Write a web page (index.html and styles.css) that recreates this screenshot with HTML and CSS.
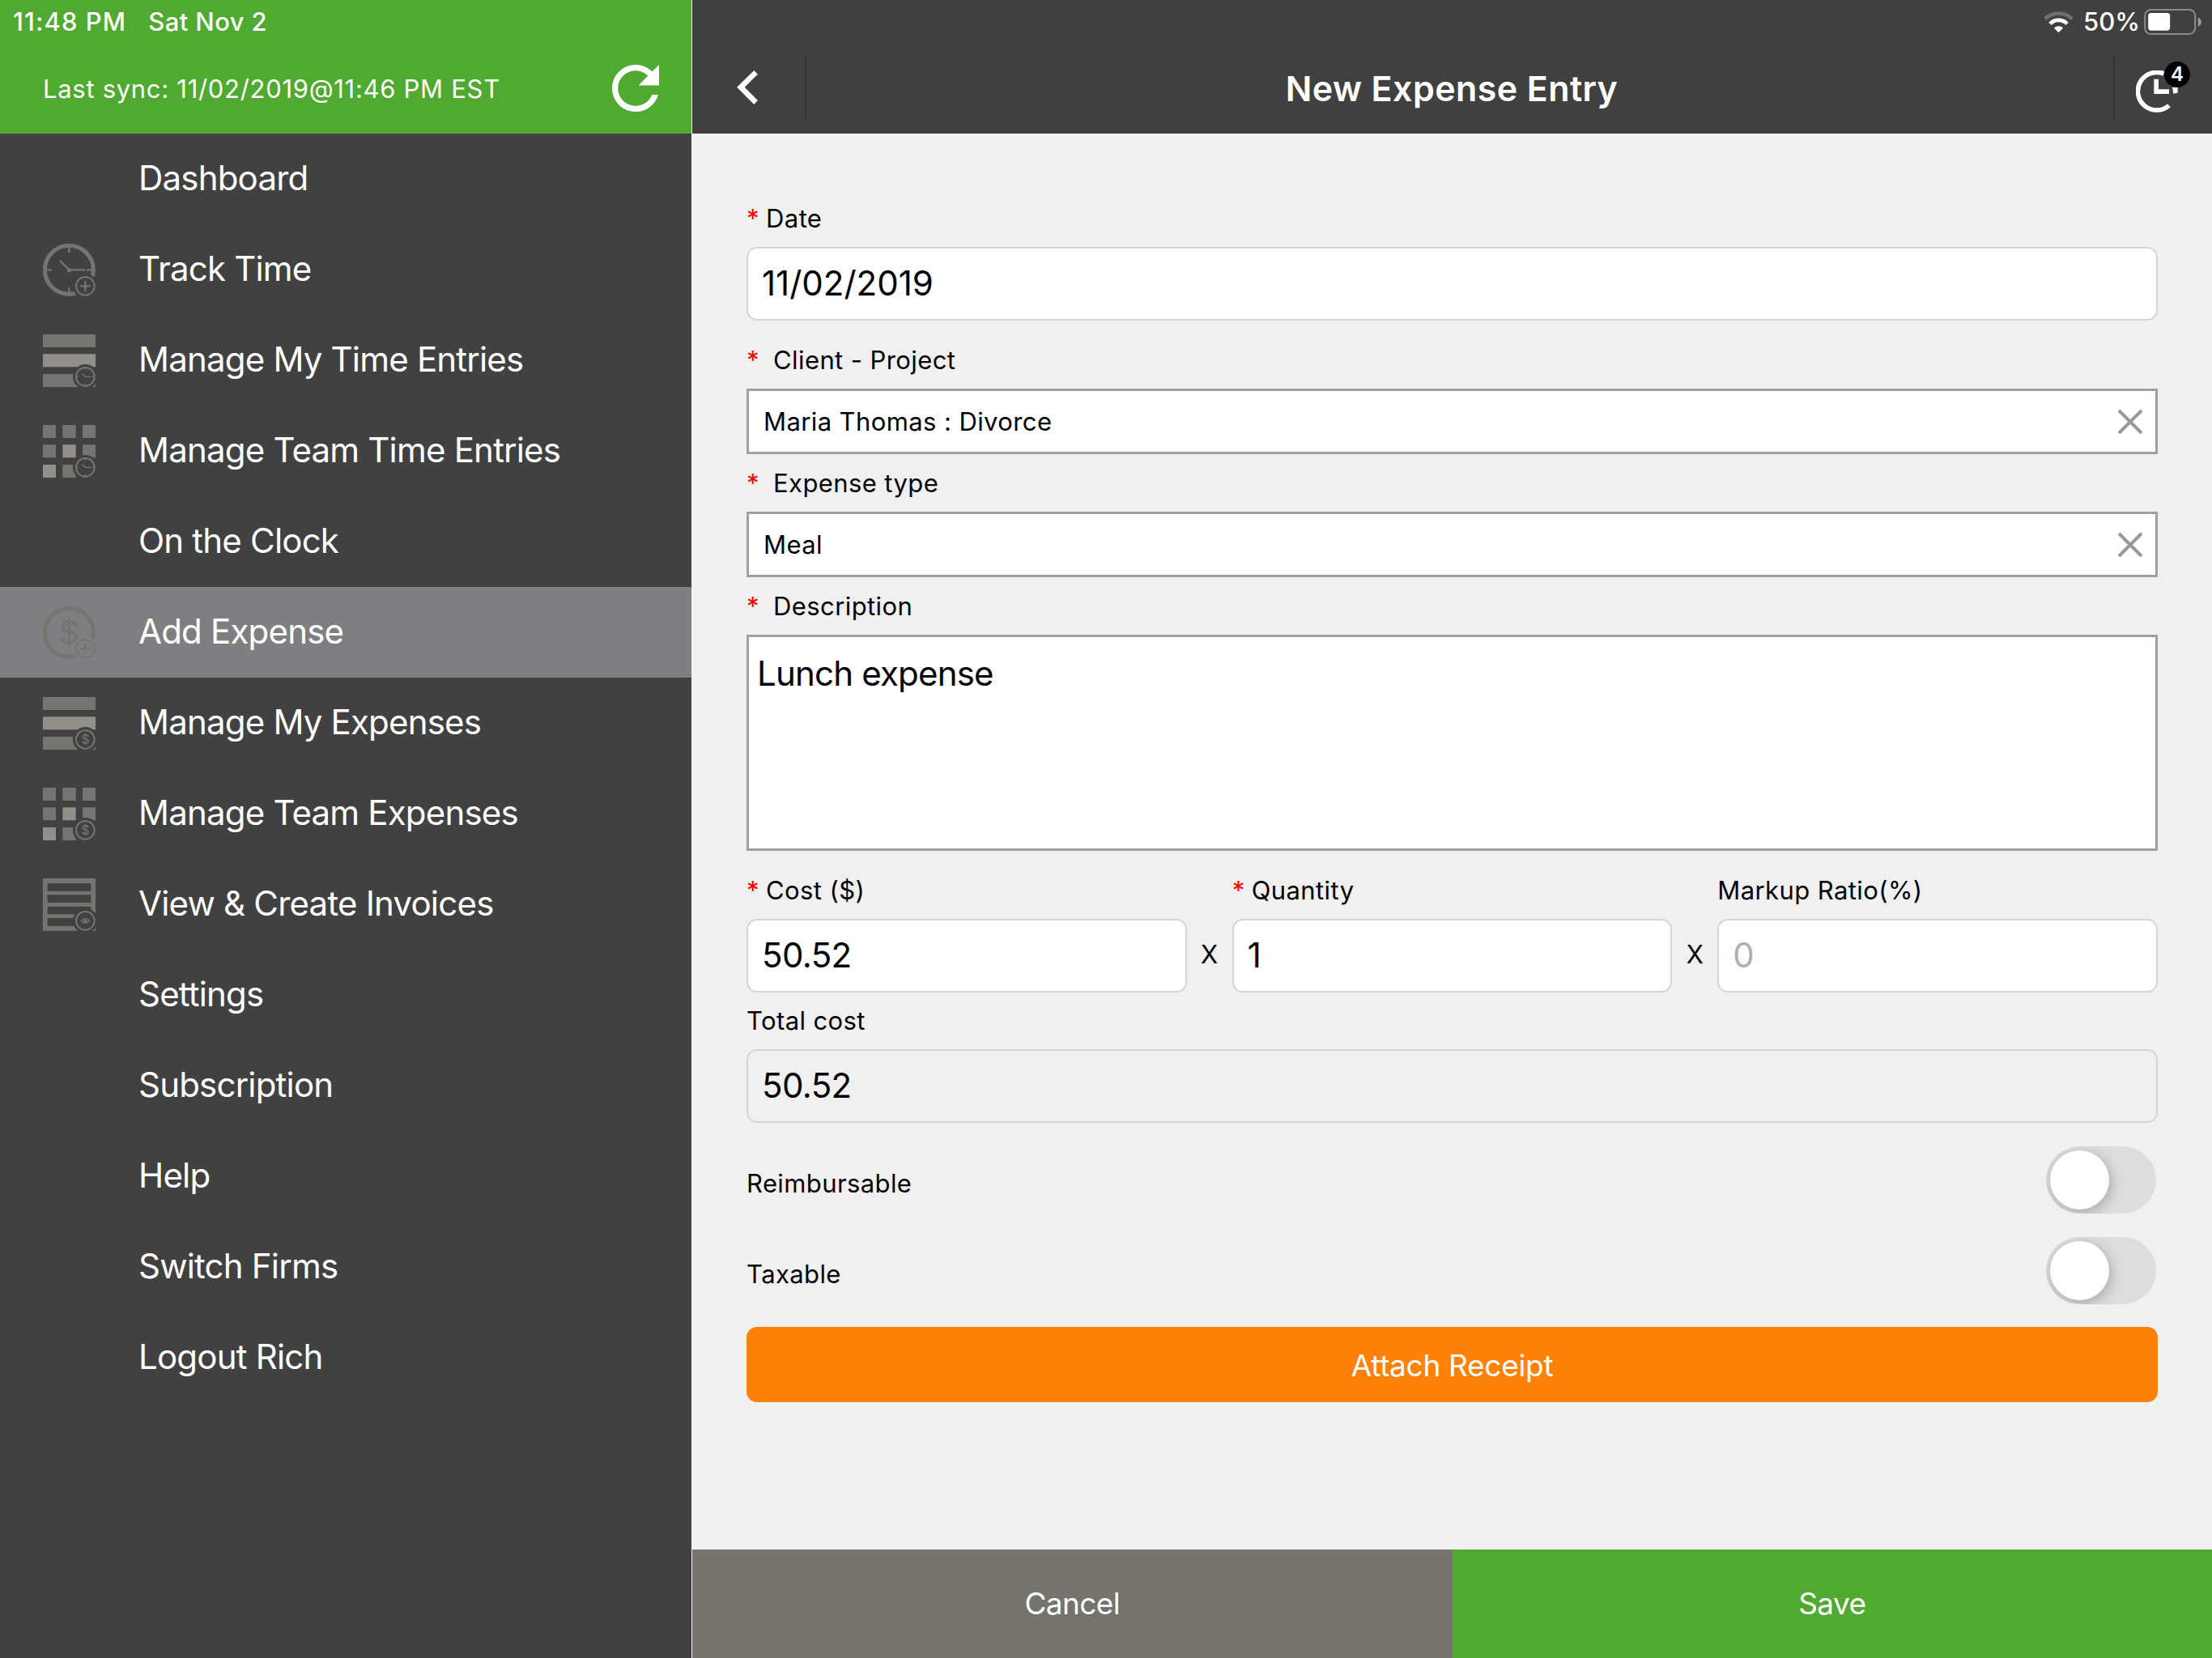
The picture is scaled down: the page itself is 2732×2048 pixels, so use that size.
FILE: index.html
```html
<!DOCTYPE html>
<html lang="en">
<head>
    <meta charset="UTF-8">
    <meta name="viewport" content="width=device-width, initial-scale=1.0">
    <title>New Expense Entry</title>
    <link rel="stylesheet" href="styles.css">
</head>
<body>
    <!-- shared icon parts -->
    <svg class="defs" width="0" height="0">
        <defs>
            <mask id="cut" maskUnits="userSpaceOnUse" x="0" y="0" width="195" height="195">
                <rect width="195" height="195" fill="#fff"/>
                <circle cx="157" cy="157" r="46" fill="#000"/>
            </mask>
            <g id="bars" mask="url(#cut)">
                <path d="M0 0h195v48H0zM0 147h195v48H0z"/>
                <path class="light" d="M0 73h195v48H0z"/>
            </g>
            <g id="tiles" mask="url(#cut)">
                <path d="M0 0h48v48H0zM73 0h49v48H73zM147 0h48v48h-48zM0 73h48v48H0zM147 73h48v48h-48zM73 147h49v48H73z"/>
                <path class="light" d="M73 73h49v48H73zM0 147h48v48H0z"/>
            </g>
            <g id="ring">
                <circle class="line" cx="157" cy="157" r="34" stroke-width="6"/>
            </g>
            <g id="badge-plus">
                <use href="#ring"/>
                <path class="line" d="M157 138v38M138 157h38" stroke-width="7"/>
            </g>
            <g id="badge-clock">
                <use href="#ring"/>
                <path class="line" d="M147 147l10 10h23M157 124v8M157 182v8M124 157h8M182 157h8" stroke-width="4"/>
            </g>
            <g id="badge-dollar">
                <use href="#ring"/>
                <text x="157" y="173" font-size="46" text-anchor="middle">$</text>
            </g>
        </defs>
    </svg>

    <div class="app">
        <aside class="sidebar">
            <div class="side-header">
                <div class="status">
                    <span class="time">11:48 PM</span>
                    <span class="day">Sat Nov 2</span>
                </div>
                <div class="sync">
                    <span class="sync-text">Last sync: 11/02/2019@11:46 PM EST</span>
                    <svg class="refresh" viewBox="80 80 352 352"><path fill="#fff" d="M256 388c-72.597 0-132-59.405-132-132 0-72.601 59.403-132 132-132 36.3 0 69.299 15.4 92.406 39.601L278 234h154V80l-51.698 51.702C348.406 99.798 304.406 80 256 80c-96.797 0-176 79.203-176 176s78.094 176 176 176c81.045 0 148.287-54.134 169.401-128H378.85c-18.745 49.561-67.138 84-122.85 84z"/></svg>
                </div>
            </div>
            <nav class="menu">
                <div class="item"><span class="icon"></span><span class="text">Dashboard</span></div>
                <div class="item">
                    <svg class="icon" viewBox="0 0 195 195">
                        <g mask="url(#cut)">
                            <circle class="line" cx="97" cy="97" r="90" stroke-width="15"/>
                            <path class="line" d="M63 63l34 34h60M97 12v21M97 162v21M12 97h21M162 97h21" stroke-width="7"/>
                            <circle cx="97" cy="98" r="8"/>
                        </g>
                        <use href="#badge-plus"/>
                    </svg>
                    <span class="text">Track Time</span>
                </div>
                <div class="item">
                    <svg class="icon" viewBox="0 0 195 195"><use href="#bars"/><use href="#badge-clock"/></svg>
                    <span class="text">Manage My Time Entries</span>
                </div>
                <div class="item">
                    <svg class="icon" viewBox="0 0 195 195"><use href="#tiles"/><use href="#badge-clock"/></svg>
                    <span class="text">Manage Team Time Entries</span>
                </div>
                <div class="item"><span class="icon"></span><span class="text">On the Clock</span></div>
                <div class="item active">
                    <svg class="icon" viewBox="0 0 195 195">
                        <g mask="url(#cut)">
                            <circle class="line" cx="97" cy="97" r="90" stroke-width="15"/>
                            <text class="dollar" x="97" y="140" font-size="122" text-anchor="middle">$</text>
                        </g>
                        <use href="#badge-plus"/>
                    </svg>
                    <span class="text">Add Expense</span>
                </div>
                <div class="item">
                    <svg class="icon" viewBox="0 0 195 195"><use href="#bars"/><use href="#badge-dollar"/></svg>
                    <span class="text">Manage My Expenses</span>
                </div>
                <div class="item">
                    <svg class="icon" viewBox="0 0 195 195"><use href="#tiles"/><use href="#badge-dollar"/></svg>
                    <span class="text">Manage Team Expenses</span>
                </div>
                <div class="item">
                    <svg class="icon" viewBox="0 0 195 195">
                        <path mask="url(#cut)" fill-rule="evenodd" d="M0 0h195v194H0zM17 18v29h161V18zM17 61v29h161V61zM17 104v29h161v-29zM17 147v29h161v-29z"/>
                        <use href="#ring"/>
                        <path class="line" d="M141 157q16-16 32 0q-16 16-32 0z" stroke-width="4"/>
                        <circle cx="157" cy="157" r="6"/>
                    </svg>
                    <span class="text">View &amp; Create Invoices</span>
                </div>
                <div class="item"><span class="icon"></span><span class="text">Settings</span></div>
                <div class="item"><span class="icon"></span><span class="text">Subscription</span></div>
                <div class="item"><span class="icon"></span><span class="text">Help</span></div>
                <div class="item"><span class="icon"></span><span class="text">Switch Firms</span></div>
                <div class="item"><span class="icon"></span><span class="text">Logout Rich</span></div>
            </nav>
        </aside>

        <main class="main">
            <header class="top">
                <div class="status right">
                    <svg class="wifi" viewBox="136 38 112 84">
                        <path d="M141 69a73 73 0 0 1 102 0" fill="none" stroke="#707070" stroke-width="13"/>
                        <path d="M160 87a45 45 0 0 1 64 0" fill="none" stroke="#fff" stroke-width="14"/>
                        <path d="M192 120l-17-17a24 24 0 0 1 34 0z" fill="#fff"/>
                    </svg>
                    <span class="percent">50%</span>
                    <svg class="battery" viewBox="504 32 212 96">
                        <rect x="507" y="35" width="186" height="90" rx="22" fill="none" stroke="#8c8c8c" stroke-width="6"/>
                        <rect x="519" y="47" width="81" height="65" rx="11" fill="#fff"/>
                        <path d="M704 64q12 5 12 16t-12 18z" fill="#9a9a9a"/>
                    </svg>
                </div>
                <div class="titlebar">
                    <div class="back">
                        <svg viewBox="181 259 78 127"><path fill="#fff" d="M245 259l14 14-49 49 49 49-14 15-64-64z"/></svg>
                    </div>
                    <h1>New Expense Entry</h1>
                    <div class="timer">
                        <svg viewBox="475 262 156 156">
                            <path d="M578 274a70 70 0 1 0 20 118" fill="none" stroke="#fff" stroke-width="17"/>
                            <path d="M610 325l20-4v24l-16 3zM542 294h17v38h39v17h-56z" fill="#fff"/>
                        </svg>
                        <span class="count">4</span>
                    </div>
                </div>
            </header>

            <section class="form">
                <div class="label"><i>*</i> Date</div>
                <div class="field date">11/02/2019</div>

                <div class="label wide"><i>*</i> Client - Project</div>
                <div class="select">
                    <span>Maria Thomas : Divorce</span>
                    <svg class="clear" viewBox="0 0 32 32"><path d="M2 2l28 28M30 2L2 30" stroke="#999" stroke-width="4"/></svg>
                </div>

                <div class="label wide"><i>*</i> Expense type</div>
                <div class="select">
                    <span>Meal</span>
                    <svg class="clear" viewBox="0 0 32 32"><path d="M2 2l28 28M30 2L2 30" stroke="#999" stroke-width="4"/></svg>
                </div>

                <div class="label wide"><i>*</i> Description</div>
                <div class="textarea">Lunch expense</div>

                <div class="cols">
                    <div class="col">
                        <div class="label"><i>*</i> Cost ($)</div>
                        <div class="field">50.52</div>
                    </div>
                    <div class="times">X</div>
                    <div class="col">
                        <div class="label"><i>*</i> Quantity</div>
                        <div class="field">1</div>
                    </div>
                    <div class="times">X</div>
                    <div class="col">
                        <div class="label">Markup Ratio(%)</div>
                        <div class="field empty">0</div>
                    </div>
                </div>

                <div class="label total">Total cost</div>
                <div class="field readonly">50.52</div>

                <div class="switches">
                    <div class="switch-row"><span>Reimbursable</span><div class="toggle"></div></div>
                    <div class="switch-row"><span>Taxable</span><div class="toggle"></div></div>
                </div>

                <div class="attach">Attach Receipt</div>
            </section>

            <footer class="actions">
                <div class="cancel">Cancel</div>
                <div class="save">Save</div>
            </footer>
        </main>
    </div>
</body>
</html>
```
FILE: styles.css
```css
* {
    box-sizing: border-box;
}
body {
    font-family: Inter, "Liberation Sans", sans-serif;
    background-color: #f0f0f0;
    color: #000;
    margin: 0;
}
.defs {
    position: absolute;
}
.app {
    display: flex;
    width: 2732px;
    height: 2048px;
}

/* sidebar */
.sidebar {
    width: 855px;
    background-color: #414141;
    color: #fff;
    border-right: 1px solid #f0f0f0;
}
.side-header {
    height: 165px;
    background-color: #50a930;
}
.status {
    display: flex;
    align-items: center;
    height: 53px;
    padding-left: 16px;
    font-size: 31px;
    font-weight: 500;
}
.time {
    letter-spacing: 1.1px;
}
.day {
    margin-left: 27px;
    letter-spacing: 0.4px;
}
.sync {
    display: flex;
    align-items: center;
    justify-content: space-between;
    height: 112px;
    padding: 0 40px 0 53px;
    font-size: 31px;
}
.sync-text {
    letter-spacing: 0.7px;
}
.refresh {
    width: 58px;
    height: 58px;
}
.item {
    display: flex;
    align-items: center;
    height: 112px;
    padding-left: 53px;
    font-size: 42px;
    letter-spacing: -0.8px;
}
.item.active {
    background-color: #7f7f81;
}
.item .text {
    padding-bottom: 4px;
}
.icon {
    width: 65px;
    height: 65px;
    margin-right: 53px;
    fill: #757470;
    font-weight: 500;
    letter-spacing: 0;
}
.line {
    fill: none;
    stroke: #757470;
}
.light {
    fill: #928e8a;
}

/* top bar */
.main {
    flex: 1;
    display: flex;
    flex-direction: column;
}
.top {
    height: 165px;
    background-color: #404040;
    color: #fff;
}
.status.right {
    justify-content: flex-end;
    padding-right: 13px;
}
.wifi {
    width: 37px;
    height: 28px;
}
.percent {
    margin: 0 5px 0 12px;
}
.battery {
    width: 71px;
    height: 32px;
}
.titlebar {
    display: flex;
    align-items: center;
    height: 112px;
}
.back {
    display: flex;
    align-items: center;
    width: 141px;
    height: 80px;
    padding: 0 0 3px 55px;
    border-right: 2px solid #353535;
}
.back svg {
    width: 26px;
    height: 42px;
}
h1 {
    flex: 1;
    margin: 0;
    padding-right: 20px;
    font-size: 43px;
    font-weight: 600;
    letter-spacing: 0.4px;
    text-align: center;
}
.timer {
    position: relative;
    width: 122px;
    height: 80px;
    padding: 18px 0 0 26px;
    border-left: 2px solid #353535;
}
.timer svg {
    width: 52px;
    height: 52px;
}
.count {
    position: absolute;
    left: 61px;
    top: 7px;
    width: 32px;
    height: 32px;
    border-radius: 50%;
    background-color: #000;
    font-size: 24px;
    font-weight: 600;
    line-height: 32px;
    text-align: center;
}

/* form */
.form {
    flex: 1;
    padding: 70px 67px 0;
}
.label {
    height: 70px;
    line-height: 70px;
    font-size: 31px;
    letter-spacing: 0.4px;
}
.label i {
    color: #f00;
    font-style: normal;
    margin-right: -1px;
}
.label.wide i {
    margin-right: 8px;
}
.field {
    height: 91px;
    padding-left: 17px;
    line-height: 86px;
    font-size: 42px;
    letter-spacing: -0.6px;
    background-color: #fff;
    border: 2px solid #d5d5d5;
    border-radius: 13px;
}
.field.date {
    margin-bottom: 14px;
    letter-spacing: 0;
}
.field.empty {
    color: #b0b0b0;
}
.field.readonly {
    background-color: #f0f0f0;
}
.select {
    display: flex;
    align-items: center;
    justify-content: space-between;
    height: 81px;
    margin-bottom: 1px;
    padding: 0 15px 0 18px;
    font-size: 31px;
    letter-spacing: 0.4px;
    background-color: #fff;
    border: 3px solid #a0a0a0;
}
.clear {
    width: 32px;
    height: 32px;
}
.textarea {
    height: 267px;
    padding: 19px 10px;
    line-height: 52px;
    font-size: 42px;
    letter-spacing: -0.8px;
    background-color: #fff;
    border: 3px solid #a0a0a0;
}
.cols {
    display: grid;
    grid-template-columns: 1fr 56px 1fr 56px 1fr;
    margin-top: 14px;
}
.times {
    padding-top: 70px;
    line-height: 88px;
    font-size: 31px;
    text-align: center;
}
.switches {
    margin-top: 14px;
}
.switch-row {
    display: flex;
    align-items: center;
    justify-content: space-between;
    height: 112px;
    padding-right: 2px;
    font-size: 31px;
    letter-spacing: 0.4px;
}
.switch-row span {
    padding-top: 9px;
}
.toggle {
    width: 136px;
    height: 83px;
    padding: 5px;
    border-radius: 42px;
    background-color: #ddd;
    overflow: hidden;
}
.toggle::before {
    content: "";
    display: block;
    width: 73px;
    height: 73px;
    border-radius: 50%;
    background-color: #fff;
    box-shadow: 2px 4px 16px rgba(0, 0, 0, 0.25);
}
.attach {
    height: 93px;
    margin-top: 14px;
    line-height: 95px;
    font-size: 37px;
    letter-spacing: -0.3px;
    text-align: center;
    color: #fff;
    background-color: #ff8208;
    border-radius: 13px;
}

/* bottom buttons */
.actions {
    display: flex;
    height: 134px;
    line-height: 134px;
    font-size: 37px;
    letter-spacing: -0.6px;
    text-align: center;
    color: #fff;
}
.cancel,
.save {
    flex: 1;
}
.cancel {
    background-color: #74736e;
}
.save {
    background-color: #50a930;
}
```
